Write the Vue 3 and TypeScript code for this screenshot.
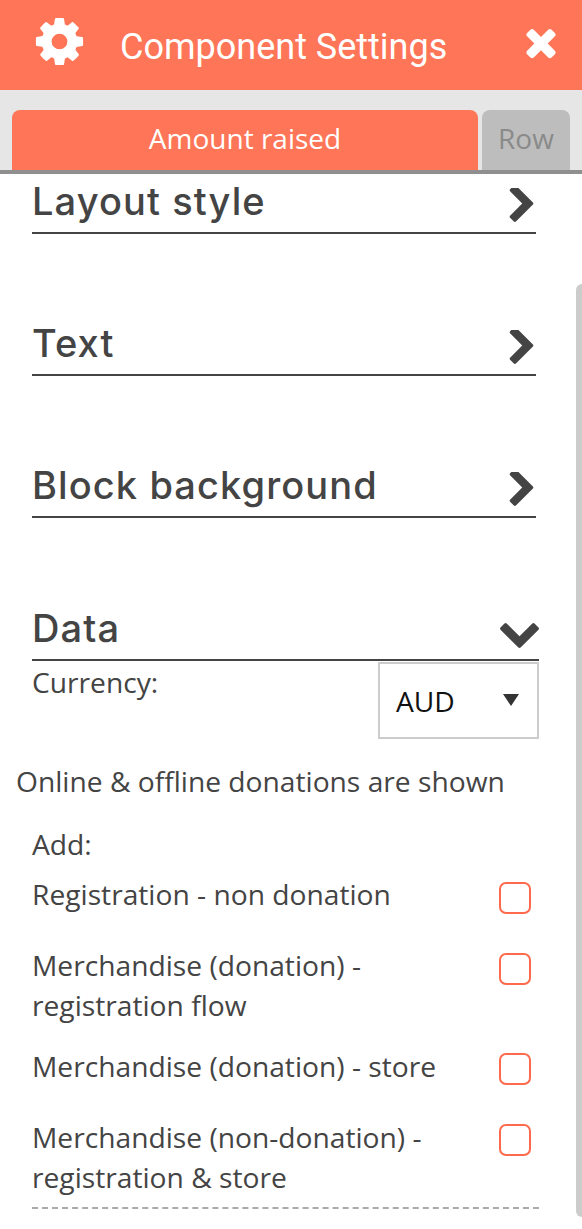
<script setup lang="ts">
const sections = ['Layout style', 'Text', 'Block background']
</script>

<template>
  <div class="app">
    <header class="head">
      <svg class="gear" viewBox="0 0 1792 1792"><path fill="#fff" d="M1152 896q0-106-75-181t-181-75-181 75-75 181 75 181 181 75 181-75 75-181zm512-109v222q0 12-8 23t-20 13l-185 28q-19 54-39 91 35 50 107 138 10 12 10 25t-9 23q-27 37-99 108t-94 71q-12 0-26-9l-138-108q-44 23-91 38-16 136-29 186-7 28-36 28h-222q-14 0-24.500-8.500t-11.500-21.500l-28-184q-49-16-90-37l-141 107q-10 9-25 9-14 0-25-11-126-114-165-168-7-10-7-23 0-12 8-23 15-21 51-66.500t54-70.500q-27-50-41-99l-183-27q-13-2-21-12.500t-8-23.500v-222q0-12 8-23t19-13l186-28q14-46 39-92-40-57-107-138-10-12-10-24 0-10 9-23 26-36 98.500-107.500t94.500-71.500q13 0 26 10l138 107q44-23 91-38 16-136 29-186 7-28 36-28h222q14 0 24.500 8.500t11.500 21.500l28 184q49 16 90 37l142-107q9-9 24-9 13 0 25 10 129 119 165 170 7 8 7 22 0 12-8 23-15 21-51 66.500t-54 70.500q26 50 41 98l183 28q13 2 21 12.500t8 23.500z"/></svg>
      <span class="title">Component Settings</span>
      <svg class="close" viewBox="0 0 1792 1792"><path fill="#fff" d="M1490 1322q0 40-28 68l-136 136q-28 28-68 28t-68-28l-294-294-294 294q-28 28-68 28t-68-28l-136-136q-28-28-28-68t28-68l294-294-294-294q-28-28-28-68t28-68l136-136q28-28 68-28t68 28l294 294 294-294q28-28 68-28t68 28l136 136q28 28 28 68t-28 68l-294 294 294 294q28 28 28 68z"/></svg>
    </header>
    <div class="tabs">
      <div class="tab active">Amount raised</div>
      <div class="tab">Row</div>
    </div>
    <div class="body">
      <div v-for="s in sections" :key="s" class="sec">
        <span>{{ s }}</span>
        <svg class="chev" viewBox="346 154 1036 1484"><path fill="#444" d="M1363 877l-742 742q-19 19-45 19t-45-19l-166-166q-19-19-19-45t19-45l531-531-531-531q-19-19-19-45t19-45l166-166q19-19 45-19t45 19l742 742q19 19 19 45t-19 45z"/></svg>
      </div>
      <div class="sec data">
        <span>Data</span>
        <svg class="chevd" viewBox="90 533 1612 1035"><path fill="#444" d="M1683 808l-742 741q-19 19-45 19t-45-19l-742-741q-19-19-19-45.500t19-45.500l166-165q19-19 45-19t45 19l531 531 531-531q19-19 45-19t45 19l166 165q19 19 19 45.500t-19 45.500z"/></svg>
      </div>
      <div class="cur">
        <span>Currency:</span>
        <div class="sel"><span class="aud">AUD</span><i></i></div>
      </div>
      <p class="note">Online &amp; offline donations are shown</p>
      <div class="add">Add:</div>
      <div class="rows">
        <div class="row"><span>Registration - non donation</span><b></b></div>
        <div class="row two"><span>Merchandise (donation) -<br>registration flow</span><b></b></div>
        <div class="row"><span>Merchandise (donation) - store</span><b></b></div>
        <div class="row two"><span>Merchandise (non-donation) -<br>registration &amp; store</span><b></b></div>
      </div>
      <div class="dash"></div>
    </div>
    <div class="scroll"></div>
  </div>
</template>

<style scoped>
.app { width: 582px; height: 1229px; position: relative; overflow: hidden; background: #fff; font-family: "Open Sans", sans-serif; color: #444; }
.head { height: 90px; background: #ff7557; display: flex; align-items: center; color: #fff; }
.gear { width: 55px; height: 55px; margin-left: 32px; margin-bottom: 7px; flex: none; }
.title { font-family: Roboto, sans-serif; font-size: 36px; margin-left: 33px; flex: 1; margin-bottom: -3px; }
.close { width: 44px; height: 44px; margin-right: 19px; margin-bottom: 6px; flex: none; }
.tabs { height: 80px; box-sizing: content-box; background: #e6e6e6; display: flex; align-items: flex-end; gap: 4px; padding: 0 12px; border-bottom: 4px solid #8f8f8f; }
.tab { height: 60px; line-height: 57px; text-align: center; font-size: 28px; background: #bdbdbd; color: #8a8a8a; border-radius: 8px 8px 0 0; width: 88px; }
.tab.active { width: 466px; background: #ff7557; color: #fff; }
.body { padding: 0 46px 0 32px; font-size: 28.2px; line-height: 41px; }
.sec { height: 60px; box-sizing: border-box; display: flex; justify-content: space-between; align-items: center; border-bottom: 2px solid #444; font-family: Inter, sans-serif; font-size: 38px; letter-spacing: 1.1px; font-weight: 500; line-height: 1; margin-bottom: 82px; }
.sec:nth-child(3) { margin-bottom: 83px; }
.sec span { margin-bottom: 4px; }
.chev { width: 25px; height: 34px; margin-right: 2px; flex: none; margin-top: 4px; }
.data { margin-bottom: 0; margin-right: -3px; }
.chevd { width: 39px; height: 25px; flex: none; margin-top: 11px; }
.cur { display: flex; justify-content: space-between; margin-right: -3px; padding-top: 1px; }
.sel { width: 161px; height: 77px; border: 2px solid #ccc; box-sizing: border-box; display: flex; align-items: center; justify-content: space-between; padding: 0 18px 0 16px; color: #111; }
.aud { padding-top: 2px; }
.sel i { border: 8px solid transparent; border-top: 12px solid #333; border-bottom: 0; margin-top: -1px; }
.note { margin: 22px 0 0 -16px; }
.add { margin-top: 22px; }
.rows { display: flex; flex-direction: column; margin-top: 9px; }
.row { display: flex; justify-content: space-between; margin-bottom: 31px; line-height: 40px; }
.row.two { margin-bottom: 21px; }
.row b { width: 32px; height: 32px; border: 2px solid #ff6a4d; border-radius: 7px; box-sizing: border-box; margin: 8px 5px 0 0; flex: none; }
.row:nth-child(3) b, .row:nth-child(4) b { margin-top: 7px; }
.dash { border-top: 2px dashed #aaa; margin: -11px -3px 0 0; }
.scroll { position: absolute; right: 0; top: 284px; bottom: 12px; width: 6px; background: #ccc; border-radius: 6px 0 0 6px; }
</style>
